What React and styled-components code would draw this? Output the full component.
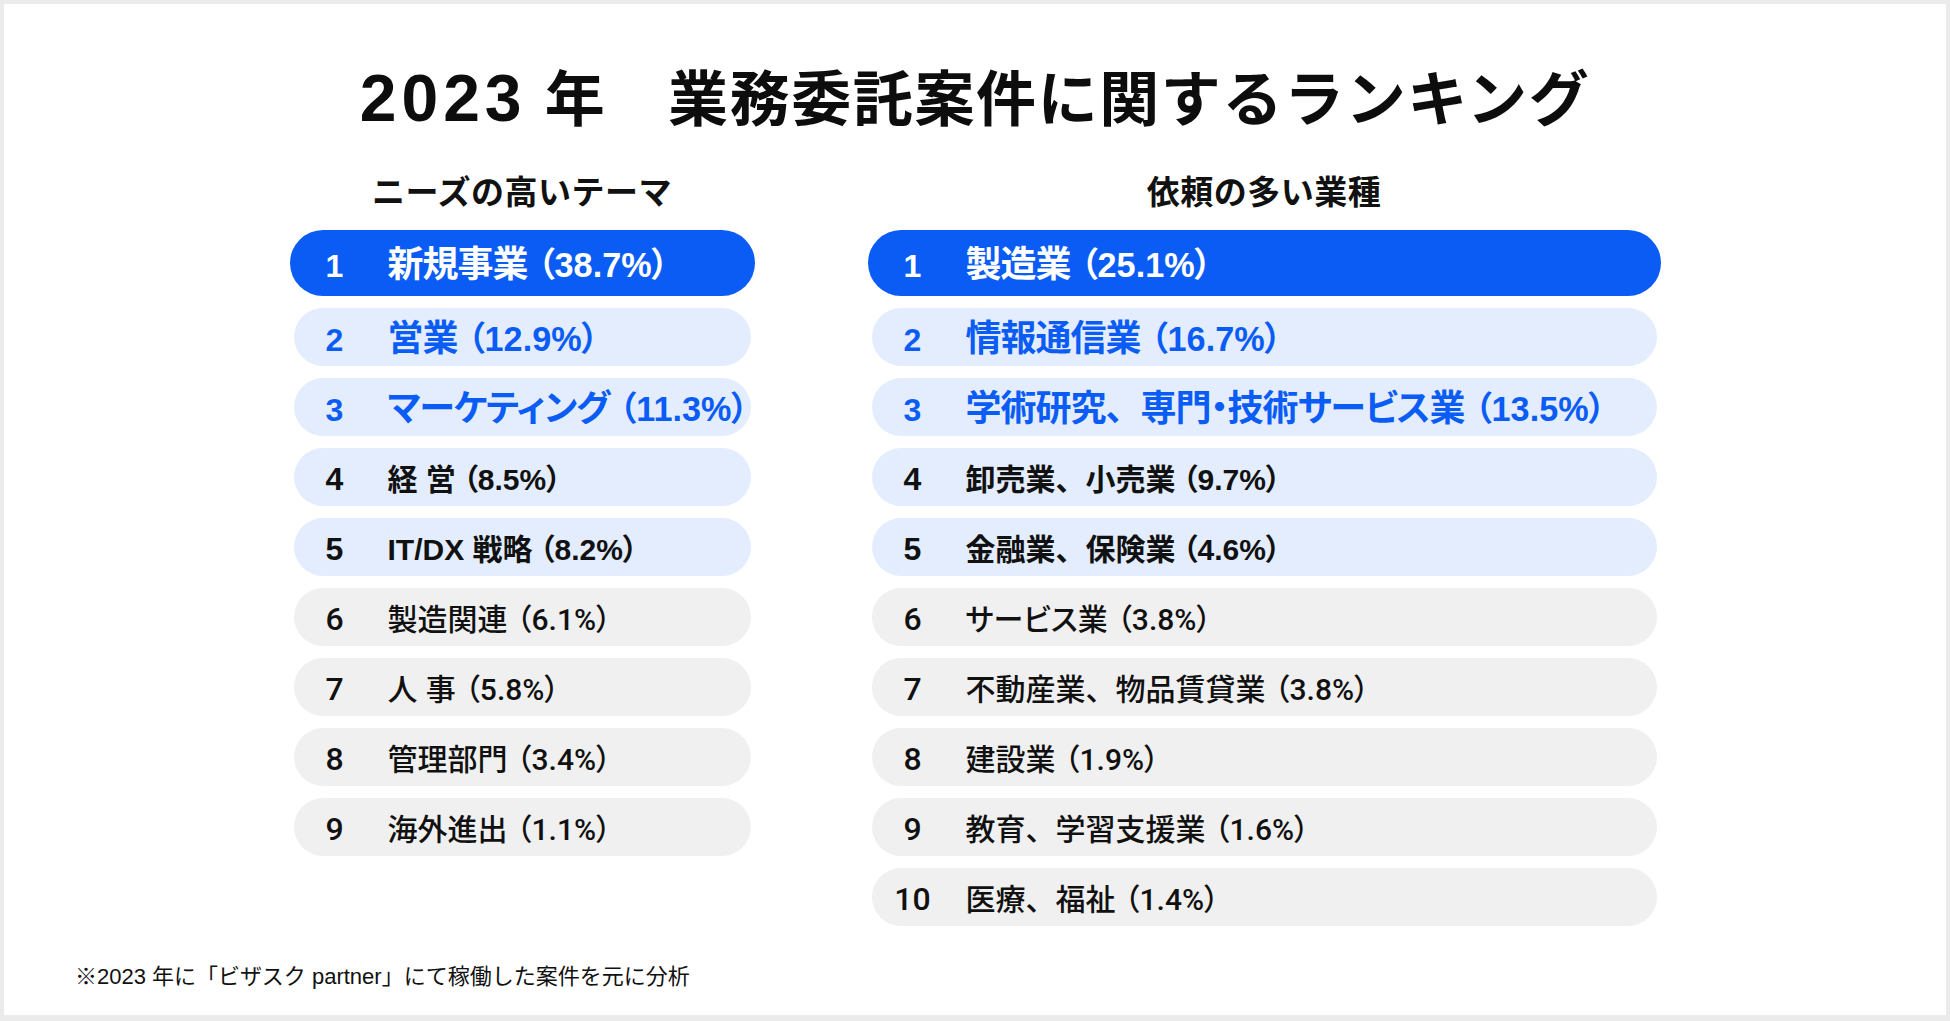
import React from 'react';
import styled, { createGlobalStyle } from 'styled-components';

const GlobalStyle = createGlobalStyle`
  html, body {
    margin: 0;
    padding: 0;
    background: #ebebeb;
  }
  body {
    font-family: "Liberation Sans", "Noto Sans CJK JP", sans-serif;
    color: #111;
  }
`;

const BLUE = '#0b5cf5';

const Frame = styled.div`
  width: 1950px;
  height: 1021px;
  padding: 4px 4px 6px 4px;
  box-sizing: border-box;
  background: #ebebeb;
`;

const Card = styled.div`
  height: 100%;
  background: #fff;
  display: flex;
  flex-direction: column;
`;

const Title = styled.h1`
  margin: 58px 0 0;
  height: 72px;
  text-align: center;
  font-size: 60px;
  line-height: 72px;
  font-weight: 700;
  letter-spacing: 1.6px;
  color: #0d0d0d;
`;

const Year = styled.span`
  font-size: 66px;
  letter-spacing: 5px;
`;

const Columns = styled.div`
  display: flex;
  justify-content: center;
  align-items: flex-start;
  gap: 113px;
  margin-top: 39px;
`;

const Column = styled.section`
  width: ${(p) => p.$width}px;
  display: flex;
  flex-direction: column;
  align-items: center;
`;

const Heading = styled.h2`
  margin: 0 0 17px;
  font-size: 33px;
  line-height: 40px;
  font-weight: 700;
  letter-spacing: 0.5px;
`;

const List = styled.ol`
  list-style: none;
  margin: 0;
  padding: 0;
  width: 100%;
  display: flex;
  flex-direction: column;
  align-items: center;
  gap: 12px;
`;

const tiers = {
  top: { bg: BLUE, color: '#fff', weight: 700, size: 36, pad: 10 },
  blue: { bg: '#e3edfd', color: BLUE, weight: 700, size: 36, pad: 10 },
  light: { bg: '#e3edfd', color: '#111', weight: 700, size: 30, pad: 7 },
  gray: { bg: '#f0f0f0', color: '#111', weight: 500, size: 30, pad: 9 },
};

const Row = styled.li`
  box-sizing: border-box;
  width: ${(p) => (p.$tier === 'top' ? '100%' : 'calc(100% - 8px)')};
  height: ${(p) => (p.$tier === 'top' ? 66 : 58)}px;
  border-radius: 33px;
  padding-left: ${(p) => (p.$tier === 'top' ? 20 : 16)}px;
  display: flex;
  align-items: center;
  background: ${(p) => tiers[p.$tier].bg};
  color: ${(p) => tiers[p.$tier].color};
  font-weight: ${(p) => tiers[p.$tier].weight};
  white-space: nowrap;
`;

const Line = styled.div`
  display: flex;
  align-items: baseline;
  line-height: 1;
  padding-top: 4px;
`;

const Rank = styled.span`
  flex: 0 0 50px;
  text-align: center;
  font-size: 32px;
  font-family: ${(p) => (p.$bold ? '"Liberation Sans"' : 'Roboto')}, sans-serif;
  font-weight: ${(p) => (p.$bold ? 700 : 500)};
`;

const Label = styled.span`
  margin-left: 28px;
  font-size: ${(p) => p.$size}px;
  letter-spacing: ${(p) => (p.$size > 30 ? -1 : 0)}px;
  font-feature-settings: "palt";
`;

const Comma = styled.span`
  font-feature-settings: normal;
`;

const Pct = styled.span`
  padding: 0 ${(p) => p.$pad}px;
  letter-spacing: 0;
  font-size: ${(p) => (p.$big ? 0.95 : 1)}em;
  font-family: ${(p) => (p.$plain ? 'Roboto, ' : '')}"Liberation Sans", "Noto Sans CJK JP", sans-serif;
`;

const Footnote = styled.p`
  margin: auto 0 0;
  padding: 0 0 23px 71px;
  font-size: 22px;
  line-height: 30px;
  color: #111;
`;

const needs = [
  ['新規事業', '38.7%', 'top'],
  ['営業', '12.9%', 'blue'],
  ['マーケティング', '11.3%', 'blue'],
  ['経 営', '8.5%', 'light'],
  ['IT/DX 戦略', '8.2%', 'light'],
  ['製造関連', '6.1%', 'gray'],
  ['人 事', '5.8%', 'gray'],
  ['管理部門', '3.4%', 'gray'],
  ['海外進出', '1.1%', 'gray'],
];

const industries = [
  ['製造業', '25.1%', 'top'],
  ['情報通信業', '16.7%', 'blue'],
  ['学術研究、専門・技術サービス業', '13.5%', 'blue'],
  ['卸売業、小売業', '9.7%', 'light'],
  ['金融業、保険業', '4.6%', 'light'],
  ['サービス業', '3.8%', 'gray'],
  ['不動産業、物品賃貸業', '3.8%', 'gray'],
  ['建設業', '1.9%', 'gray'],
  ['教育、学習支援業', '1.6%', 'gray'],
  ['医療、福祉', '1.4%', 'gray'],
];

// keep the ideographic comma full width, the rest proportional
const withCommas = (text) =>
  text.split('、').map((part, i) => (
    <React.Fragment key={i}>
      {i > 0 && <Comma>、</Comma>}
      {part}
    </React.Fragment>
  ));

const Ranking = ({ title, items, width }) => (
  <Column $width={width}>
    <Heading>{title}</Heading>
    <List>
      {items.map(([label, pct, tier], i) => (
        <Row key={label} $tier={tier}>
          <Line>
            <Rank $bold={tier !== 'gray'}>{i + 1}</Rank>
            <Label $size={tiers[tier].size}>
              {withCommas(label)}
              <Pct
                $plain={tier === 'gray'}
                $big={tiers[tier].size > 30}
                $pad={tiers[tier].pad}
              >
                （{pct}）
              </Pct>
            </Label>
          </Line>
        </Row>
      ))}
    </List>
  </Column>
);

const App = () => (
  <Frame>
    <GlobalStyle />
    <Card>
      <Title>
        <Year>2023</Year> 年　業務委託案件に関するランキング
      </Title>
      <Columns>
        <Ranking title="ニーズの高いテーマ" items={needs} width={465} />
        <Ranking title="依頼の多い業種" items={industries} width={793} />
      </Columns>
      <Footnote>※2023 年に「ビザスク partner」にて稼働した案件を元に分析</Footnote>
    </Card>
  </Frame>
);

export default App;
